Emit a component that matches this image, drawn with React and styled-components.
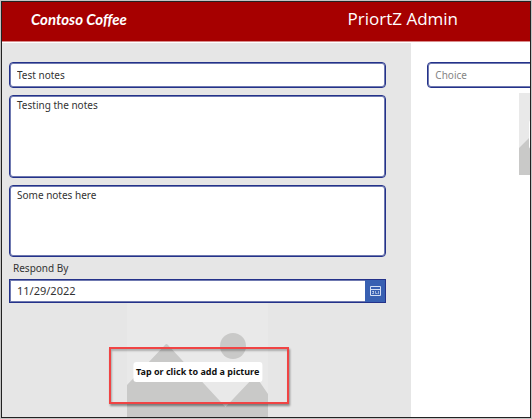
import React from "react";
import styled, { createGlobalStyle } from "styled-components";

const GlobalStyle = createGlobalStyle`
  *, *::before, *::after { box-sizing: border-box; }
  body { margin: 0; background: #c4c4c4; }
  body, input, textarea, button { font-family: "Noto Sans", "Open Sans", sans-serif; }
`;

const Window = styled.div`
  height: 100vh;
  padding: 1px;
  display: flex;
`;

const Frame = styled.div`
  flex: 1;
  min-width: 0;
  display: flex;
  flex-direction: column;
  overflow: hidden;
  border: 1px solid #222;
  background: #fff;
`;

const Header = styled.header`
  flex: none;
  height: 40px;
  padding: 0 72px 6px 29px;
  display: flex;
  align-items: center;
  justify-content: space-between;
  background: #a60000;
  border-bottom: 1px solid #d98c8c;
  color: #fff;
  white-space: nowrap;
`;

const Logo = styled.div`
  font: italic 700 15px/20px Lato, sans-serif;
`;

const Title = styled.h1`
  margin: 0;
  font-family: "Open Sans", "Noto Sans", sans-serif;
  font-size: 17px;
  line-height: 24px;
  font-weight: 400;
`;

const Columns = styled.main`
  flex: 1;
  min-height: 0;
  margin-top: 1px;
  display: grid;
  grid-template-columns: 3.45fr 1fr;
`;

const FormPanel = styled.form`
  min-width: 0;
  padding: 19px 25px 0 7px;
  display: flex;
  flex-direction: column;
  background: #e6e6e6;
`;

const SidePanel = styled.section`
  min-width: 0;
  padding: 19px 0 0 16px;
  overflow: hidden;
`;

const TextField = styled.input`
  display: block;
  flex: none;
  width: ${(p) => p.$width || "100%"};
  height: 26px;
  padding: 0 7px;
  border: 1px solid #24328a;
  border-radius: 4px;
  background: #fff;
  box-shadow: inset 0 0 0 1px #6f79b0;
  color: #333;
  font-size: 10px;
  outline: none;

  &::placeholder { color: #858585; opacity: 1; }
`;

const NotesField = styled.textarea`
  display: block;
  flex: none;
  width: 100%;
  height: ${(p) => p.$height};
  margin-top: 7px;
  padding: 1px 7px;
  border: 1px solid #24328a;
  border-radius: 4px;
  background: #fff;
  box-shadow: inset 0 0 0 1px #6f79b0;
  color: #333;
  font-size: 10px;
  line-height: 16px;
  resize: none;
  outline: none;
`;

const FieldLabel = styled.label`
  flex: none;
  padding: 3px 4px;
  font-size: 10px;
  line-height: 16px;
  color: #333;
`;

const DateRow = styled.div`
  flex: none;
  display: flex;
  height: 24px;
  border: 1px solid #24328a;
  background: #fff;
  box-shadow: inset 0 0 0 1px #6f79b0;
`;

const DateInput = styled.input`
  flex: 1;
  min-width: 0;
  padding: 0 7px 2px;
  border: 0;
  background: transparent;
  color: #333;
  font-size: 11px;
  outline: none;
`;

const CalendarButton = styled.button`
  width: 20px;
  padding: 0;
  display: grid;
  place-items: center;
  border: 0;
  background: #3860b2;
`;

const AddPicture = styled.button`
  position: relative;
  flex: 1;
  min-height: 0;
  width: 141px;
  padding: 0;
  border: 0;
  align-self: center;
  background: #e9e9e9;

  svg { display: block; width: 100%; height: 100%; }
`;

const PictureCaption = styled.span`
  position: absolute;
  top: 59px;
  left: 50%;
  transform: translateX(-50%);
  padding: 0 3px;
  border-radius: 3px;
  background: #fff;
  color: #111;
  font-size: 9px;
  line-height: 20px;
  font-weight: 700;
  white-space: nowrap;
`;

const Highlight = styled.span`
  position: absolute;
  top: 44px;
  left: -18px;
  right: -21px;
  height: 57px;
  border: 2px solid #f04444;
  box-shadow: 1px 2px 2px rgba(0, 0, 0, 0.4), inset 1px 2px 2px rgba(0, 0, 0, 0.25);
  pointer-events: none;
`;

const SidePicture = styled.div`
  position: relative;
  width: 100px;
  height: 82px;
  margin: 5px 0 0 92px;
  background: #e9e9e9;

  svg { display: block; width: 100%; height: 100%; }
`;

const SideCaption = styled.span`
  position: absolute;
  top: 27px;
  left: 10px;
  width: 80px;
  height: 29px;
  border-radius: 3px;
  background: #fff;
`;

function PlaceholderArt() {
  return (
    <svg viewBox="0 0 141 114" preserveAspectRatio="xMidYMin slice" aria-hidden="true">
      <g fill="#c9c9c8">
        <circle cx="106" cy="43" r="13" />
        <path d="M0 82 38 42Q39.500 40 41 42L98.500 104 126 75Q128 73 130 75L141 91V200H0Z" />
      </g>
    </svg>
  );
}

function CalendarIcon() {
  return (
    <svg width="11" height="11" viewBox="0 0 11 11" fill="none" stroke="#d5e0f5" aria-hidden="true">
      <path d="M.5.5h10v9H.5zM.5 3.500h10" />
      <path d="M2 5.500h2M3.500 5v3M5.500 5v2.500h2M8.500 5v3M2 7.500h1" strokeOpacity=".65" />
    </svg>
  );
}

export default function App() {
  return (
    <>
      <GlobalStyle />
      <Window>
        <Frame>
          <Header>
            <Logo>Contoso Coffee</Logo>
            <Title>PriortZ Admin</Title>
          </Header>
          <Columns>
            <FormPanel onSubmit={(e) => e.preventDefault()}>
              <TextField aria-label="Title" defaultValue="Test notes" />
              <NotesField aria-label="Description" $height="83px" defaultValue="Testing the notes" />
              <NotesField aria-label="Comments" $height="72px" defaultValue="Some notes here" />
              <FieldLabel htmlFor="respond-by">Respond By</FieldLabel>
              <DateRow>
                <DateInput id="respond-by" defaultValue="11/29/2022" />
                <CalendarButton type="button" aria-label="Open calendar">
                  <CalendarIcon />
                </CalendarButton>
              </DateRow>
              <AddPicture type="button">
                <PlaceholderArt />
                <PictureCaption>Tap or click to add a picture</PictureCaption>
                <Highlight />
              </AddPicture>
            </FormPanel>
            <SidePanel>
              <TextField aria-label="Choice" placeholder="Choice" $width="200%" />
              <SidePicture>
                <svg viewBox="0 0 100 82" aria-hidden="true">
                  <path d="M0 55 28 27 68 72 86 54 100 68V82H0Z" fill="#c9c9c8" />
                </svg>
                <SideCaption />
              </SidePicture>
            </SidePanel>
          </Columns>
        </Frame>
      </Window>
    </>
  );
}
